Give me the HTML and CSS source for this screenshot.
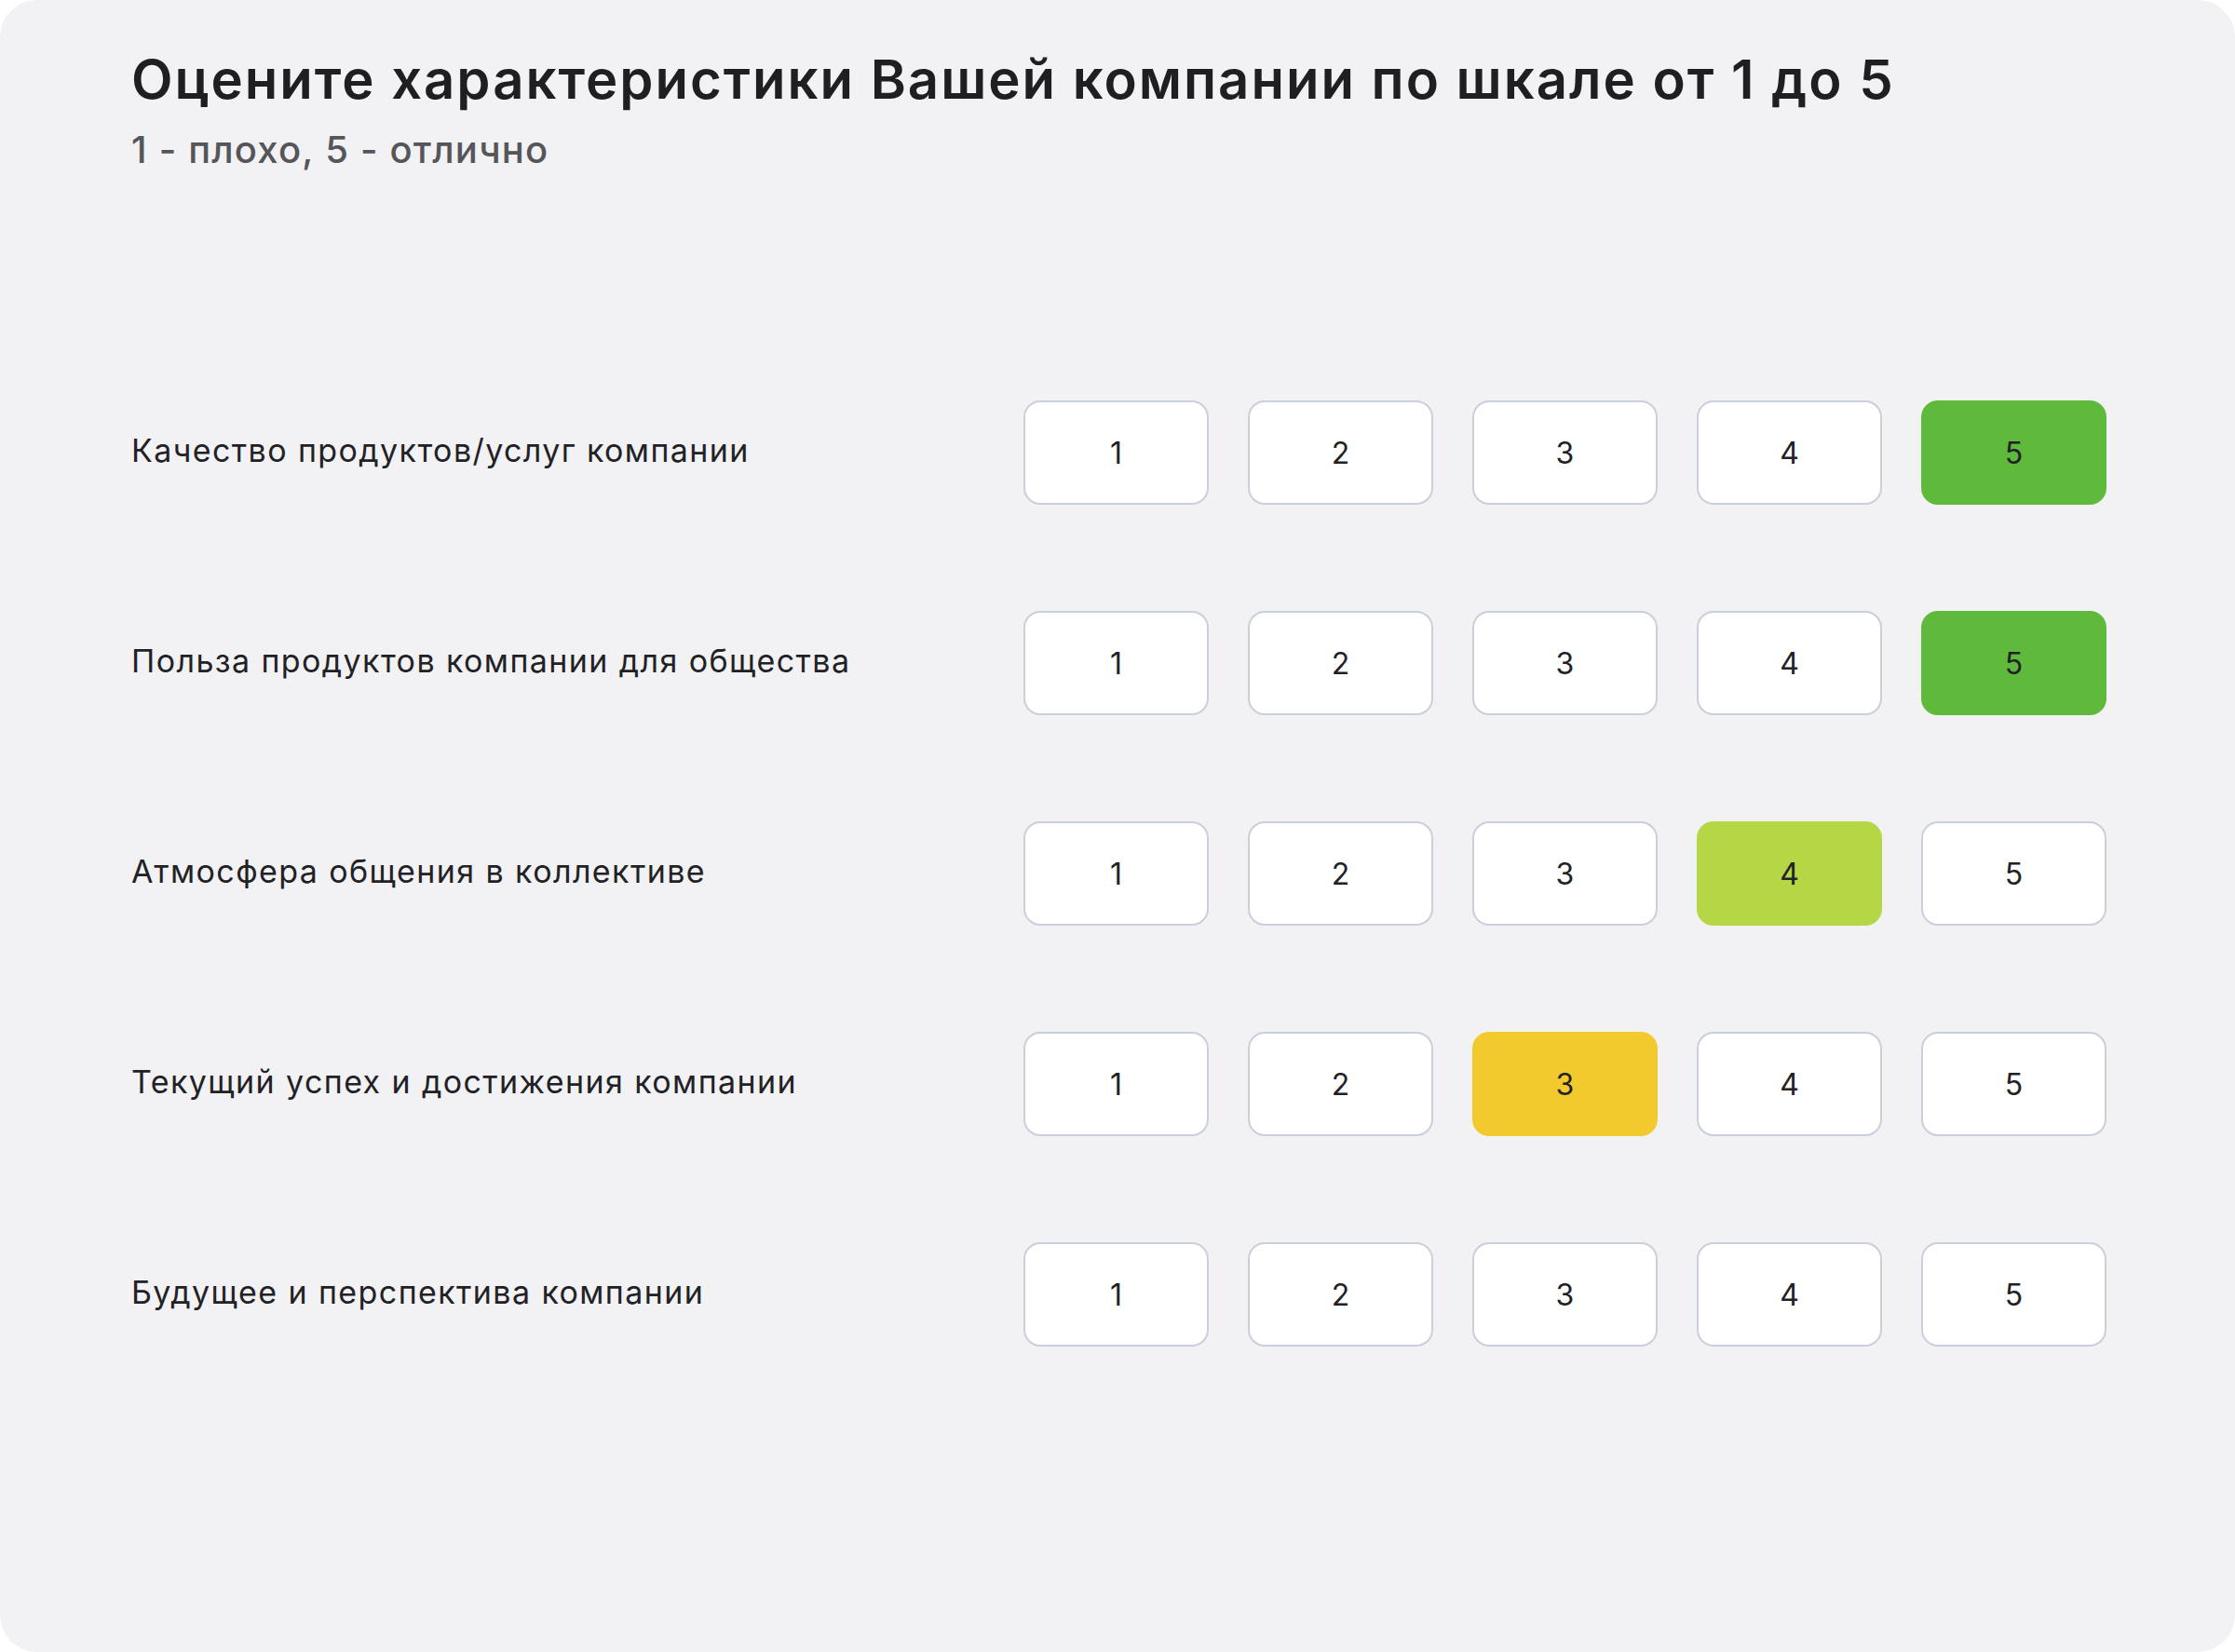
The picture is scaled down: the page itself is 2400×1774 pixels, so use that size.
FILE: index.html
```html
<!DOCTYPE html>
<html lang="ru">
<head>
    <meta charset="UTF-8">
    <meta name="viewport" content="width=device-width, initial-scale=1.0">
    <title>Оценка компании</title>
    <link rel="stylesheet" href="styles.css">
</head>
<body>
    <div class="survey">
        <div class="survey-head">
            <h1>Оцените характеристики Вашей компании по шкале от 1 до 5</h1>
            <p class="hint">1 - плохо, 5 - отлично</p>
        </div>
        <div class="rows">
            <div class="row">
                <div class="label">Качество продуктов/услуг компании</div>
                <div class="scale">
                    <button>1</button>
                    <button>2</button>
                    <button>3</button>
                    <button>4</button>
                    <button class="pick-5">5</button>
                </div>
            </div>
            <div class="row">
                <div class="label">Польза продуктов компании для общества</div>
                <div class="scale">
                    <button>1</button>
                    <button>2</button>
                    <button>3</button>
                    <button>4</button>
                    <button class="pick-5">5</button>
                </div>
            </div>
            <div class="row">
                <div class="label">Атмосфера общения в коллективе</div>
                <div class="scale">
                    <button>1</button>
                    <button>2</button>
                    <button>3</button>
                    <button class="pick-4">4</button>
                    <button>5</button>
                </div>
            </div>
            <div class="row">
                <div class="label">Текущий успех и достижения компании</div>
                <div class="scale">
                    <button>1</button>
                    <button>2</button>
                    <button class="pick-3">3</button>
                    <button>4</button>
                    <button>5</button>
                </div>
            </div>
            <div class="row">
                <div class="label">Будущее и перспектива компании</div>
                <div class="scale">
                    <button>1</button>
                    <button>2</button>
                    <button>3</button>
                    <button>4</button>
                    <button>5</button>
                </div>
            </div>
        </div>
    </div>
</body>
</html>
```

FILE: styles.css
```css
html, body {
    margin: 0;
    padding: 0;
    background: #ffffff;
}
body {
    font-family: 'Inter', 'Noto Sans', sans-serif;
    color: #222226;
}
.survey {
    box-sizing: border-box;
    width: 2400px;
    height: 1774px;
    background: #f2f2f4;
    border-radius: 40px;
    padding: 50px 138px 0 141px;
}
.survey-head h1 {
    margin: 0;
    font-size: 58px;
    font-weight: 600;
    line-height: 70px;
    letter-spacing: 2px;
    color: #1f1f22;
}
.hint {
    margin: 18px 0 0;
    font-size: 40px;
    font-weight: 500;
    line-height: 46px;
    letter-spacing: 1.2px;
    color: #55555a;
}
.rows {
    margin-top: 246px;
    display: flex;
    flex-direction: column;
    gap: 114px;
}
.row {
    display: flex;
    align-items: center;
    justify-content: space-between;
}
.label {
    font-size: 34px;
    line-height: 40px;
    letter-spacing: 1.4px;
    color: #222226;
    margin-top: -4px;
}
.scale {
    display: flex;
    gap: 42px;
}
.scale button {
    box-sizing: border-box;
    width: 199px;
    height: 112px;
    background: #ffffff;
    border: 2px solid #c9cfdc;
    border-radius: 18px;
    font-family: inherit;
    font-size: 32px;
    color: #222226;
    cursor: pointer;
}
.scale .pick-5 {
    background: #5fba3c;
    border-color: #5fba3c;
}
.scale .pick-4 {
    background: #b5d745;
    border-color: #b5d745;
}
.scale .pick-3 {
    background: #f2ca2e;
    border-color: #f2ca2e;
}
```
